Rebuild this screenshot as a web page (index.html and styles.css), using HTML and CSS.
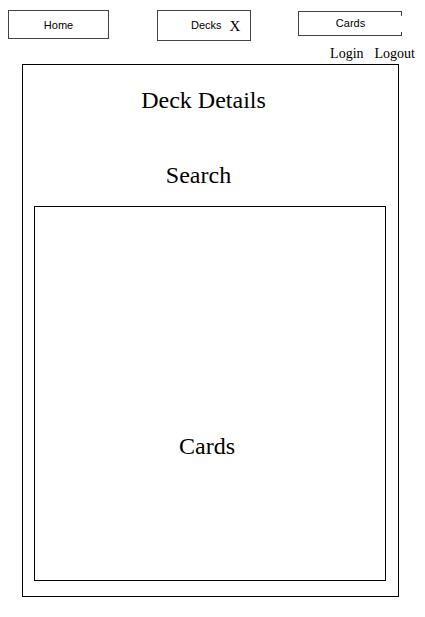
FILE: index.html
```html
<!DOCTYPE html>
<html lang="en">
<head>
<meta charset="utf-8">
<title>Deck Details</title>
<link rel="stylesheet" href="styles.css">
</head>
<body>
<nav class="nav">
  <div class="tab tab-home">Home</div>
  <div class="tab tab-decks"><span>Decks</span><span class="close">X</span></div>
  <div class="tab tab-cards">Cards</div>
</nav>
<div class="auth">
  <span>Login</span>
  <span>Logout</span>
</div>
<main class="panel">
  <h1 class="title">Deck Details</h1>
  <div class="search">Search</div>
  <section class="cards">
    <div class="cards-label">Cards</div>
  </section>
</main>
</body>
</html>
```
FILE: styles.css
```css
html, body {
  margin: 0;
  padding: 0;
  background: #fff;
  color: #000;
}
body {
  width: 425px;
  height: 617px;
  overflow: hidden;
  font-family: "Liberation Serif", "Times New Roman", serif;
}
.nav {
  display: flex;
  align-items: flex-start;
  padding: 10px 0 0 8px;
  height: 31px;
}
.tab {
  box-sizing: border-box;
  display: flex;
  align-items: center;
  justify-content: center;
  font-family: "Liberation Sans", Arial, sans-serif;
  font-size: 11px;
  border: 1px solid #444;
}
.tab-home {
  width: 101px;
  height: 29px;
}
.tab-decks {
  width: 94px;
  height: 31px;
  margin-left: 48px;
  justify-content: flex-start;
  padding: 0 0 2px 33px;
  gap: 8px;
}
.close {
  font-family: "Liberation Serif", "Times New Roman", serif;
  font-size: 15px;
  padding-top: 4px;
}
.tab-cards {
  width: 104px;
  height: 25px;
  margin-left: 47px;
  margin-top: 1px;
  padding-bottom: 1px;
  border-right: none;
  background:
    linear-gradient(#444, #444) right top / 1px 4px no-repeat,
    linear-gradient(#444, #444) right bottom / 1px 3px no-repeat;
}
.auth {
  display: flex;
  justify-content: flex-end;
  gap: 11px;
  padding-right: 10px;
  margin-top: 5px;
  font-size: 14px;
  line-height: 16px;
  height: 16px;
}
.panel {
  box-sizing: border-box;
  width: 377px;
  height: 533px;
  margin: 2px 0 0 22px;
  border: 1px solid #000;
  padding-top: 21px;
}
.title {
  margin: 0;
  font-weight: normal;
  font-size: 24px;
  line-height: 28px;
  text-align: center;
  padding-right: 14px;
}
.search {
  margin-top: 47px;
  font-size: 24px;
  line-height: 28px;
  text-align: center;
  padding-right: 24px;
}
.cards {
  box-sizing: border-box;
  width: 352px;
  height: 375px;
  margin: 17px 0 0 11px;
  border: 1px solid #000;
  padding-top: 225px;
}
.cards-label {
  font-size: 24px;
  line-height: 28px;
  text-align: center;
  padding-right: 6px;
}
```
